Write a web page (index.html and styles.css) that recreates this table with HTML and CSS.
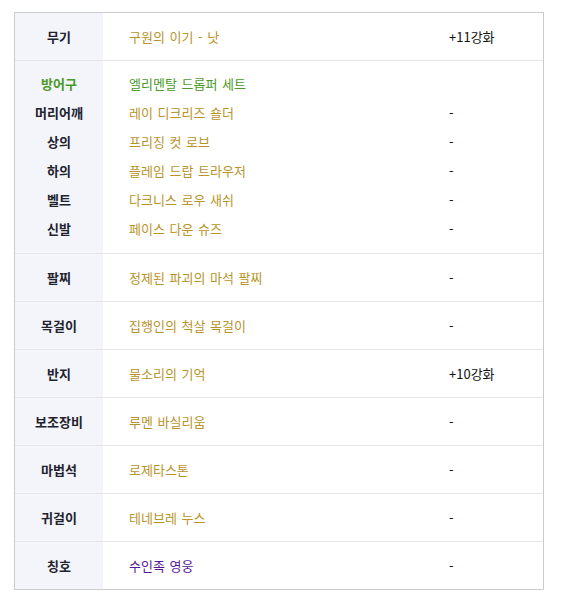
FILE: index.html
```html
<!DOCTYPE html>
<html lang="ko">
<head>
<meta charset="utf-8">
<link rel="stylesheet" href="styles.css">
</head>
<body>
<div class="equip">
  <div class="row">
    <div class="label">무기</div>
    <div class="name gold">구원의 이기 - 낫</div>
    <div class="enh">+11강화</div>
  </div>
  <div class="row group">
    <div class="line"><div class="label green">방어구</div><div class="name green">엘리멘탈 드롭퍼 세트</div><div class="enh"></div></div>
    <div class="line"><div class="label">머리어깨</div><div class="name gold">레이 디크리즈 숄더</div><div class="enh">-</div></div>
    <div class="line"><div class="label">상의</div><div class="name gold">프리징 컷 로브</div><div class="enh">-</div></div>
    <div class="line"><div class="label">하의</div><div class="name gold">플레임 드랍 트라우저</div><div class="enh">-</div></div>
    <div class="line"><div class="label">벨트</div><div class="name gold">다크니스 로우 새쉬</div><div class="enh">-</div></div>
    <div class="line"><div class="label">신발</div><div class="name gold">페이스 다운 슈즈</div><div class="enh">-</div></div>
  </div>
  <div class="row">
    <div class="label">팔찌</div>
    <div class="name gold">정제된 파괴의 마석 팔찌</div>
    <div class="enh">-</div>
  </div>
  <div class="row">
    <div class="label">목걸이</div>
    <div class="name gold">집행인의 척살 목걸이</div>
    <div class="enh">-</div>
  </div>
  <div class="row">
    <div class="label">반지</div>
    <div class="name gold">물소리의 기억</div>
    <div class="enh">+10강화</div>
  </div>
  <div class="row">
    <div class="label">보조장비</div>
    <div class="name gold">루멘 바실리움</div>
    <div class="enh">-</div>
  </div>
  <div class="row">
    <div class="label">마법석</div>
    <div class="name gold">로제타스톤</div>
    <div class="enh">-</div>
  </div>
  <div class="row">
    <div class="label">귀걸이</div>
    <div class="name gold">테네브레 누스</div>
    <div class="enh">-</div>
  </div>
  <div class="row">
    <div class="label">칭호</div>
    <div class="name purple">수인족 영웅</div>
    <div class="enh">-</div>
  </div>
</div>
</body>
</html>
```
FILE: styles.css
```css
html, body {
  margin: 0;
  padding: 0;
  background: #ffffff;
}

body {
  font-family: "Noto Sans CJK KR", "Noto Sans", sans-serif;
  font-size: 13px;
  color: #111111;
}

.equip {
  margin: 12px 0 0 14px;
  width: 528px;
  border: 1px solid #cccccc;
  background: linear-gradient(to right, #f3f5fa 88px, #ffffff 88px);
}

.row {
  display: grid;
  grid-template-columns: 88px 321px 119px;
  align-items: center;
  height: 47px;
  border-top: 1px solid #e6e6e6;
}

.row:first-child {
  border-top: none;
}

.row.group {
  display: flex;
  flex-direction: column;
  height: auto;
  padding: 8px 0 10px;
}

.line {
  display: grid;
  grid-template-columns: 88px 321px 119px;
  align-items: center;
  height: 29px;
  width: 100%;
}

.label {
  text-align: center;
  font-weight: bold;
  color: #22222e;
}

.name {
  padding-left: 26px;
  word-spacing: 1px;
}

.enh {
  padding-left: 25px;
  color: #111111;
}

.gold {
  color: #b8942a;
}

.green {
  color: #4c9a2a;
}

.purple {
  color: #55189a;
}
```
